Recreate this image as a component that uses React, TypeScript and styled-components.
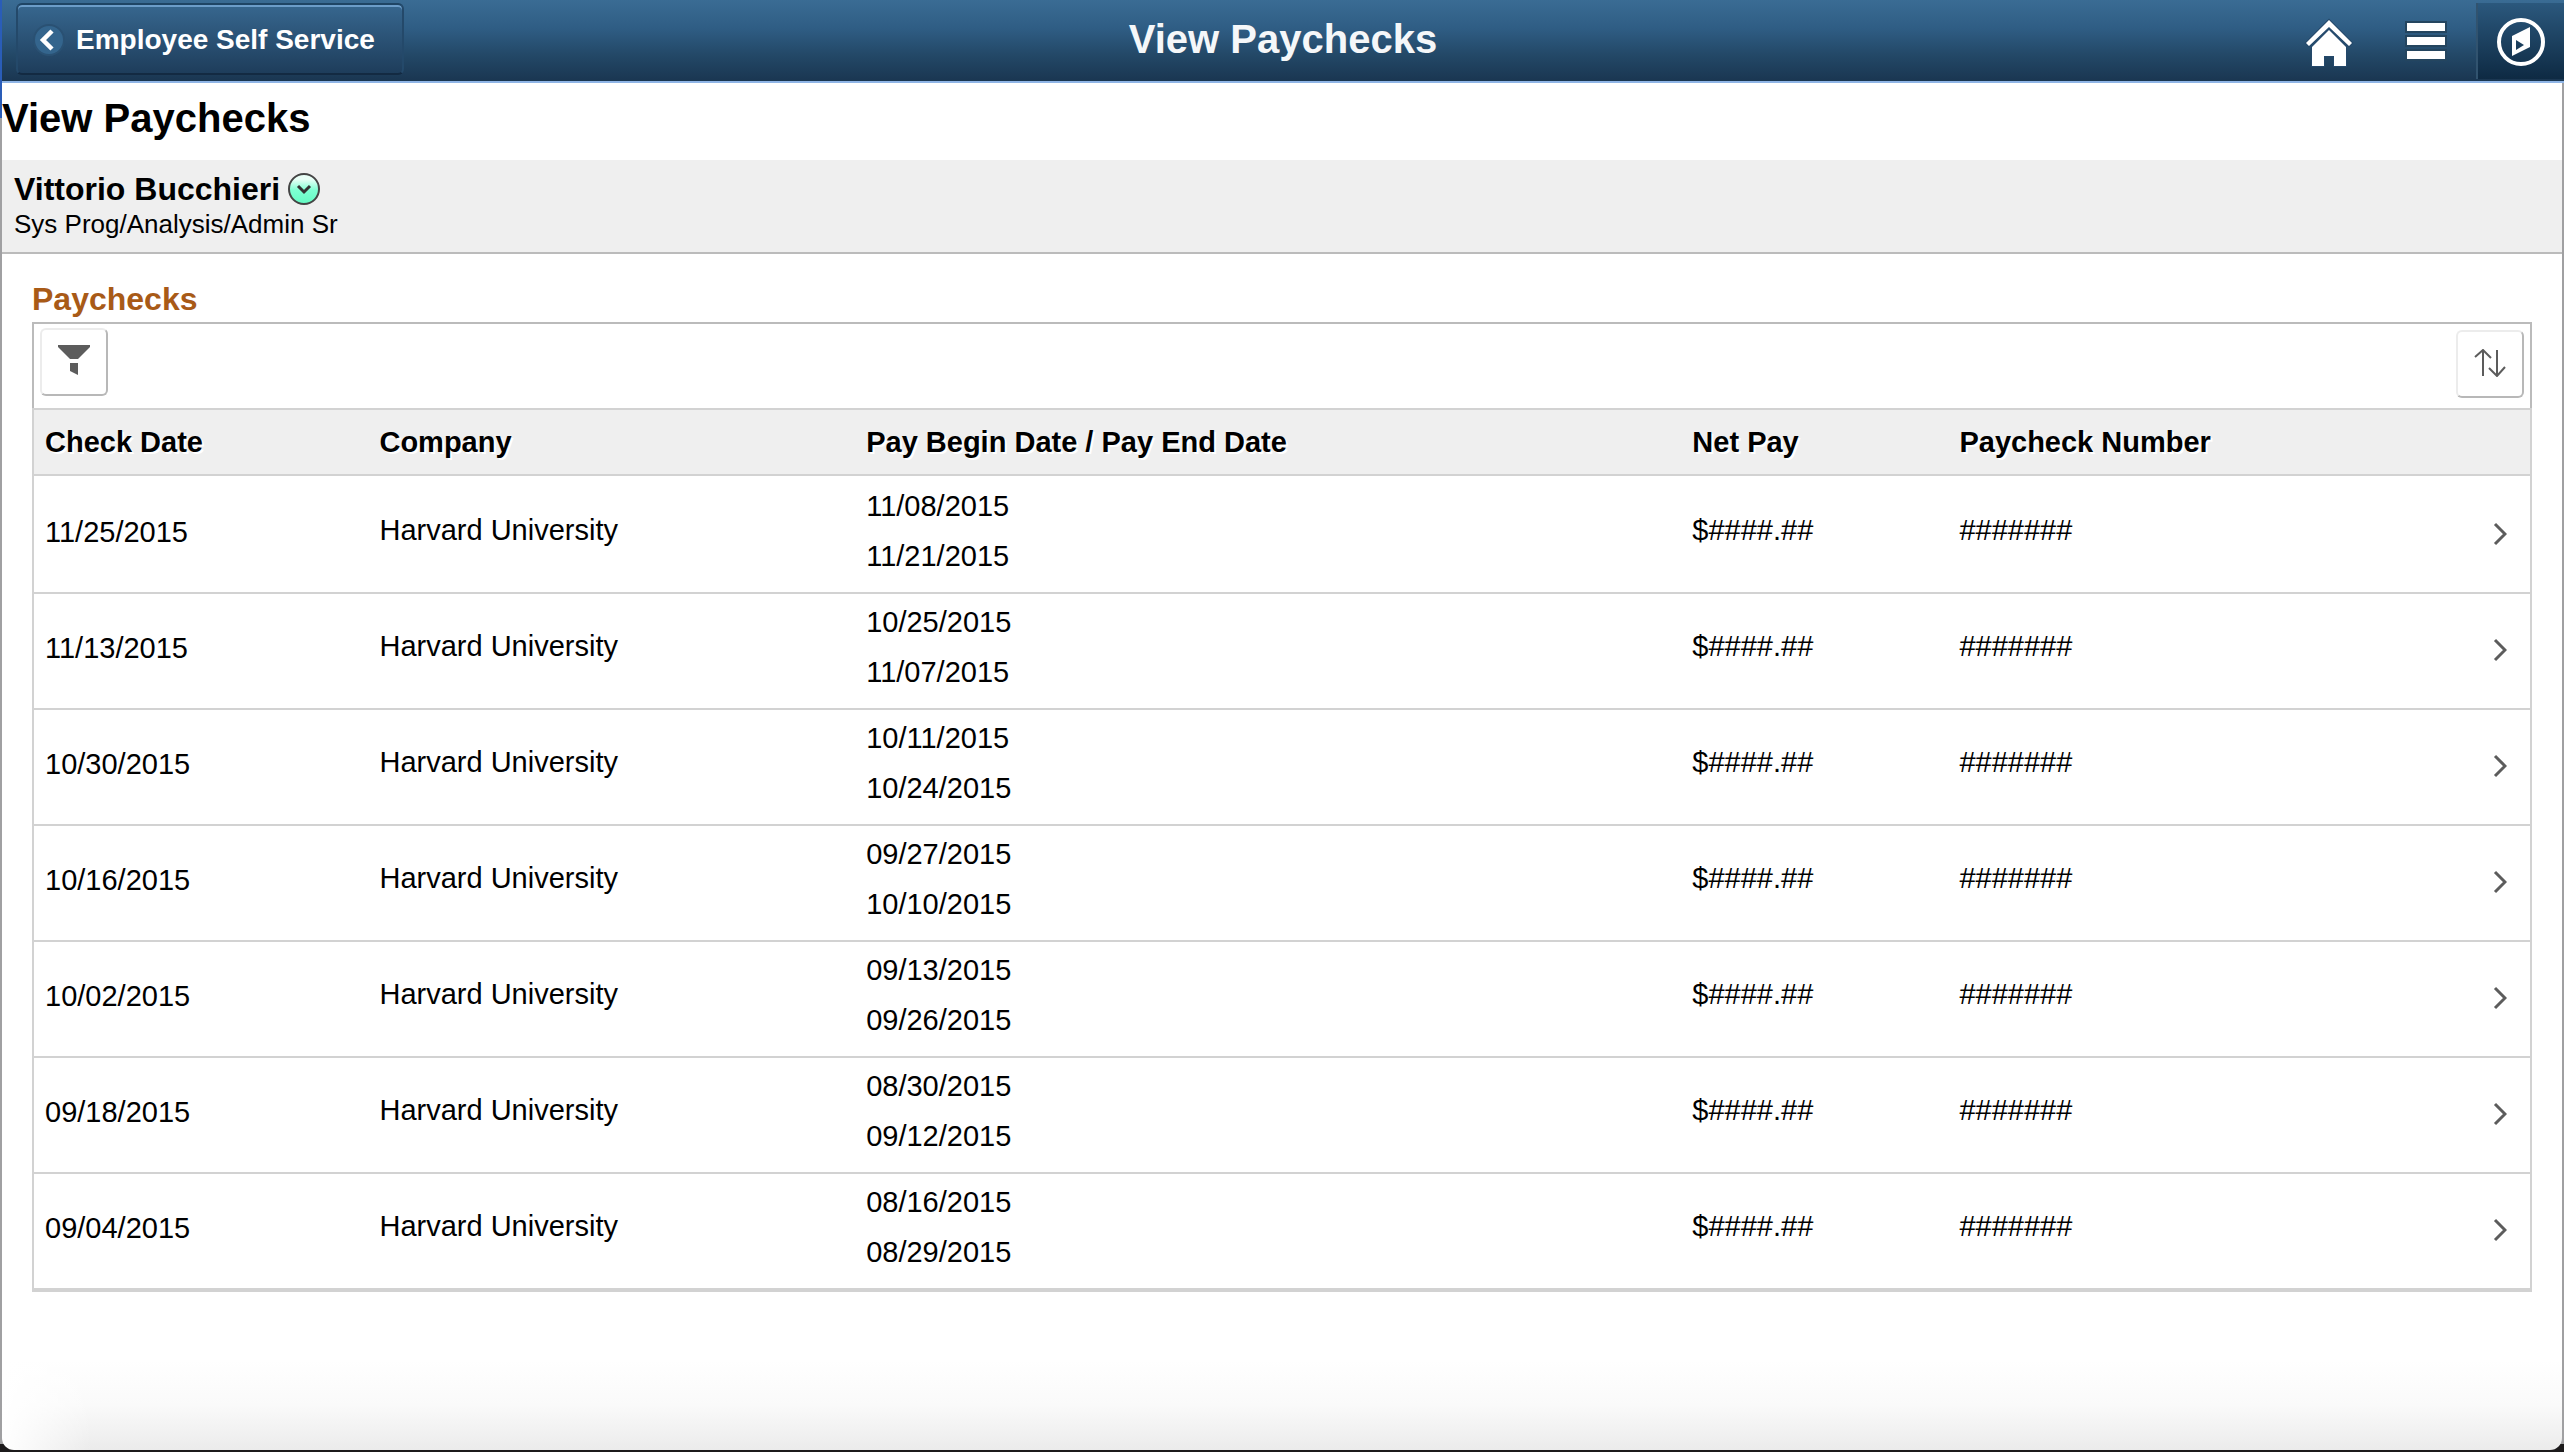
import React from "react";
import styled, { createGlobalStyle } from "styled-components";

const GlobalStyle = createGlobalStyle`
  *, *::before, *::after { box-sizing: border-box; }
  body {
    margin: 0;
    font-family: "Liberation Sans", Arial, sans-serif;
    color: #000;
  }
  h1, h2, p { margin: 0; }
  button { font-family: inherit; cursor: pointer; }
`;

const Frame = styled.div`
  min-height: 100vh;
  padding: 0 2px 2px;
  display: flex;
  background:
    linear-gradient(#2a5db8 118px, transparent 118px) left / 2px 100% no-repeat,
    linear-gradient(#1c1a1b, #1c1a1b) bottom / 100% 8px no-repeat,
    #a0a0a2;
`;

const Page = styled.div`
  flex: 1;
  min-width: 0;
  display: flex;
  flex-direction: column;
  border-radius: 0 0 12px 12px;
  background:
    linear-gradient(to right, #fff, rgba(255, 255, 255, 0) 90px) bottom / 100% 90px no-repeat,
    linear-gradient(#fff, #fafafa 50%, #ebebeb) bottom / 100% 90px no-repeat,
    #fff;
`;

const Banner = styled.header`
  display: grid;
  grid-template-columns: 1fr auto 1fr;
  margin-right: -2px;
  padding: 3px 0 2px;
  border-bottom: 2px solid #8fb5e6;
  background: linear-gradient(#3a6c94 0%, #2f5d84 35%, #234867 68%, #1a3651 100%);
`;

const BackButton = styled.button`
  justify-self: start;
  align-self: start;
  display: flex;
  align-items: center;
  gap: 10px;
  width: 388px;
  height: 72px;
  margin-left: 14px;
  padding: 2px 14px 0;
  border: 2px solid;
  border-color: #1f4565 #24496a #132a42;
  border-radius: 6px;
  background: linear-gradient(#37678f, #1e3d5b);
  box-shadow: inset 0 2px 0 #6c9dc9;
  color: #fff;
  font-size: 28px;
  font-weight: 700;
  line-height: 32px;
  white-space: nowrap;
`;

const BannerTitle = styled.div`
  align-self: center;
  padding-bottom: 4px;
  color: #f5f7f9;
  font-size: 40px;
  font-weight: 700;
  line-height: 44px;
`;

const BannerActions = styled.nav`
  display: flex;
  justify-content: flex-end;
`;

const IconAction = styled.button<{ $active?: boolean }>`
  display: flex;
  align-items: center;
  justify-content: center;
  width: ${(p) => (p.$active ? 88 : 98)}px;
  height: 76px;
  padding: 0;
  border: 0;
  border-left: ${(p) => (p.$active ? "2px solid #31536f" : "0")};
  background: ${(p) => (p.$active ? "linear-gradient(#2b587d, #0e2a43)" : "transparent")};
`;

const Heading = styled.h1`
  padding: 13px 0 20px;
  font-size: 40px;
  line-height: 44px;
`;

const Person = styled.section`
  padding: 10px 12px 12px;
  border-bottom: 2px solid #bbb;
  background: #efefef;
`;

const PersonName = styled.div`
  display: flex;
  align-items: center;
  gap: 8px;
  font-size: 32px;
  font-weight: 700;
  line-height: 38px;
`;

const PersonRole = styled.p`
  font-size: 26px;
  line-height: 32px;
`;

const MenuToggle = styled.button`
  display: flex;
  width: 32px;
  height: 32px;
  padding: 0;
  border: 2px solid #444;
  border-radius: 50%;
  background: linear-gradient(#e9fff7 15%, #7dffd2 55%, #66fbc4);
`;

const Content = styled.main`
  padding: 26px 30px 0;
`;

const GroupTitle = styled.h2`
  color: #a85a17;
  font-size: 32px;
  line-height: 38px;
`;

const Grid = styled.div`
  margin-top: 4px;
  border: 2px solid #d2d2d2;
  background: #fff;
`;

const Toolbar = styled.div`
  display: flex;
  justify-content: space-between;
  height: 86px;
  margin: -2px -2px 0;
  padding: 4px 6px 0;
  border: 2px solid #bbb;
  border-bottom: 0;
`;

const ToolButton = styled.button<{ $drop?: boolean }>`
  display: flex;
  align-items: center;
  justify-content: center;
  width: 68px;
  height: 68px;
  margin-top: ${(p) => (p.$drop ? 2 : 0)}px;
  padding: 0 0 2px;
  border: 2px solid;
  border-color: #ececec #b8b8b8 #b8b8b8 #ececec;
  border-radius: 6px;
  background: #fff;
`;

const Table = styled.table`
  width: 100%;
  table-layout: fixed;
  border-collapse: separate;
  border-spacing: 0;
  font-size: 29px;
`;

const Col = styled.col<{ $width: string }>`
  width: ${(p) => p.$width};
`;

const HeadCell = styled.th`
  padding: 12px 11px;
  border-top: 2px solid #d2d2d2;
  border-bottom: 2px solid #d2d2d2;
  background: #efefef;
  line-height: 40px;
  text-align: left;
  text-shadow: 2px 2px 0 #fff;
  white-space: nowrap;
`;

const Row = styled.tr`
  &:first-child td { border-top: 2px solid #fff; }
`;

const Cell = styled.td<{ $top: number }>`
  padding: ${(p) => p.$top}px 11px 0;
  border-bottom: 2px solid #d2d2d2;
  line-height: 50px;
  vertical-align: top;
`;

const DateLine = styled.div`
  height: 50px;
`;

const LastLine = styled(DateLine)`
  height: 61px;
`;

const OpenCell = styled(Cell)`
  padding: 0 10px 2px;
  vertical-align: middle;
`;

const OpenButton = styled.button`
  display: flex;
  align-items: center;
  justify-content: center;
  width: 40px;
  height: 40px;
  margin-left: auto;
  padding: 0;
  border: 0;
  background: transparent;
`;

const HomeIcon = () => (
  <svg width="52" height="52" viewBox="-1 -1 52 52" fill="#fff" stroke="#24486a" strokeWidth="2" paintOrder="stroke" aria-hidden="true">
    <path d="M25 14 L42 31 V50 H30 V40 H20 V50 H8 V31 Z" />
    <path d="M25 4 L48 27 L45 30 L25 11 L5 30 L2 27 Z" />
  </svg>
);

const MenuIcon = () => (
  <svg width="52" height="52" viewBox="0 0 52 52" aria-hidden="true">
    <g fill="#24455f">
      <rect x="4" y="6" width="42" height="12" />
      <rect x="4" y="20" width="42" height="12" />
      <rect x="4" y="34" width="42" height="12" />
    </g>
    <g fill="#fff">
      <rect x="6" y="8" width="38" height="8" />
      <rect x="6" y="22" width="38" height="8" />
      <rect x="6" y="36" width="38" height="8" />
    </g>
  </svg>
);

const CompassIcon = () => (
  <svg width="52" height="52" viewBox="0 0 52 52" aria-hidden="true">
    <circle cx="26" cy="27" r="22" fill="none" stroke="#fff" strokeWidth="4" />
    <path d="M35 12 L17 21 V41 L35 32 Z M21 25 L29 30 L21 35 Z" fill="#fff" fillRule="evenodd" />
  </svg>
);

const BackIcon = () => (
  <svg width="34" height="34" viewBox="0 0 34 34" aria-hidden="true">
    <circle cx="17" cy="17" r="15" fill="#34658d" stroke="#2a5173" strokeWidth="2" />
    <path d="M20 8 L11 17 L20 26" fill="none" stroke="#fff" strokeWidth="4.5" />
  </svg>
);

const DownIcon = () => (
  <svg width="28" height="28" viewBox="0 0 28 28" aria-hidden="true">
    <path d="M8 11 L14 17 L20 11" fill="none" stroke="#333" strokeWidth="3" />
  </svg>
);

const FilterIcon = () => (
  <svg width="32" height="32" viewBox="0 0 32 32" fill="#5c5c5c" aria-hidden="true">
    <path d="M0 0 H32 V2 L20 14 H12 L0 2 Z" />
    <path d="M12 18 H20 V30 L12 26 Z" />
  </svg>
);

const SortIcon = () => (
  <svg width="32" height="28" viewBox="0 0 32 28" fill="none" stroke="#5c5c5c" strokeWidth="2" aria-hidden="true">
    <path d="M9 27 V1 M1 8 L9 1 L17 9" />
    <path d="M23 1 V27 M15 19 L23 27 L31 18" />
  </svg>
);

const OpenIcon = () => (
  <svg width="14" height="24" viewBox="0 0 14 24" aria-hidden="true">
    <path d="M2 2 L12 12 L2 22" fill="none" stroke="#5c5c5c" strokeWidth="3" />
  </svg>
);

const columns = [
  { title: "Check Date", width: "13.4%" },
  { title: "Company", width: "19.5%" },
  { title: "Pay Begin Date / Pay End Date", width: "33.1%" },
  { title: "Net Pay", width: "10.7%" },
  { title: "Paycheck Number", width: "auto" },
];

const paychecks = [
  ["11/25/2015", "11/08/2015", "11/21/2015"],
  ["11/13/2015", "10/25/2015", "11/07/2015"],
  ["10/30/2015", "10/11/2015", "10/24/2015"],
  ["10/16/2015", "09/27/2015", "10/10/2015"],
  ["10/02/2015", "09/13/2015", "09/26/2015"],
  ["09/18/2015", "08/30/2015", "09/12/2015"],
  ["09/04/2015", "08/16/2015", "08/29/2015"],
];

export default function App() {
  return (
    <Frame>
      <GlobalStyle />
      <Page>
        <Banner>
          <BackButton type="button">
            <BackIcon />
            Employee Self Service
          </BackButton>
          <BannerTitle>View Paychecks</BannerTitle>
          <BannerActions>
            <IconAction type="button" aria-label="Home"><HomeIcon /></IconAction>
            <IconAction type="button" aria-label="Actions"><MenuIcon /></IconAction>
            <IconAction type="button" aria-label="NavBar" $active><CompassIcon /></IconAction>
          </BannerActions>
        </Banner>
        <Heading>View Paychecks</Heading>
        <Person>
          <PersonName>
            Vittorio Bucchieri
            <MenuToggle type="button" aria-label="Related actions"><DownIcon /></MenuToggle>
          </PersonName>
          <PersonRole>Sys Prog/Analysis/Admin Sr</PersonRole>
        </Person>
        <Content>
          <GroupTitle>Paychecks</GroupTitle>
          <Grid>
            <Toolbar>
              <ToolButton type="button" aria-label="Filter"><FilterIcon /></ToolButton>
              <ToolButton type="button" aria-label="Sort" $drop><SortIcon /></ToolButton>
            </Toolbar>
            <Table>
              <colgroup>
                {columns.map((c) => <Col key={c.title} $width={c.width} />)}
                <Col $width="100px" />
              </colgroup>
              <thead>
                <tr>
                  {columns.map((c) => <HeadCell key={c.title} scope="col">{c.title}</HeadCell>)}
                  <HeadCell as="td" />
                </tr>
              </thead>
              <tbody>
                {paychecks.map(([check, begin, end]) => (
                  <Row key={check}>
                    <Cell $top={29}>{check}</Cell>
                    <Cell $top={27}>Harvard University</Cell>
                    <Cell $top={3}>
                      <DateLine>{begin}</DateLine>
                      <LastLine>{end}</LastLine>
                    </Cell>
                    <Cell $top={27}>$####.##</Cell>
                    <Cell $top={27}>#######</Cell>
                    <OpenCell $top={0}>
                      <OpenButton type="button" aria-label={`Open paycheck ${check}`}><OpenIcon /></OpenButton>
                    </OpenCell>
                  </Row>
                ))}
              </tbody>
            </Table>
          </Grid>
        </Content>
      </Page>
    </Frame>
  );
}
